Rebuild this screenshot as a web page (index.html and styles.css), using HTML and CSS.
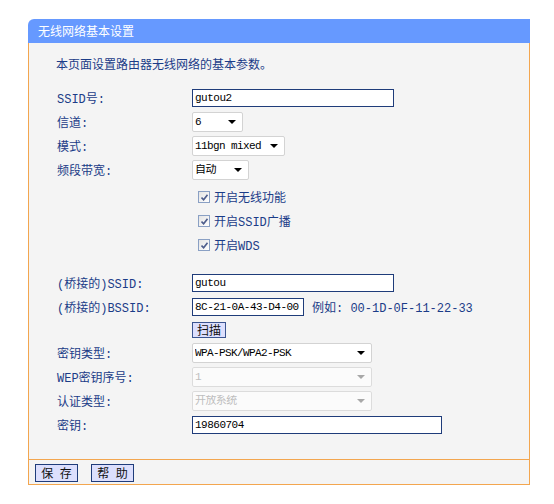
FILE: index.html
```html
<!DOCTYPE html>
<html lang="zh-CN">
<head>
  <meta charset="UTF-8" />
  <title>无线网络基本设置</title>
  <link rel="stylesheet" href="styles.css">
</head>
<body>
  <div class="panel">
    <div class="panel-title">无线网络基本设置</div>
    <div class="panel-body">
      <p class="intro">本页面设置路由器无线网络的基本参数。</p>
      <table class="form">
        <tr>
          <td class="lbl">SSID号:</td>
          <td><input class="text w-ssid" type="text" value="gutou2"></td>
        </tr>
        <tr>
          <td class="lbl">信道:</td>
          <td><span class="select w-ch"><select><option>6</option></select></span></td>
        </tr>
        <tr>
          <td class="lbl">模式:</td>
          <td><span class="select w-mode"><select><option>11bgn mixed</option></select></span></td>
        </tr>
        <tr>
          <td class="lbl">频段带宽:</td>
          <td><span class="select w-bw"><select><option>自动</option></select></span></td>
        </tr>
        <tr class="spacer-s"><td colspan="2"></td></tr>
        <tr>
          <td></td>
          <td><label class="chk"><span class="box"><svg width="7" height="7" viewBox="0 0 7 7"><path d="M0.5 3.5 L2.6 5.8 L6.5 0.8" fill="none" stroke="#4d5d8c" stroke-width="1.6"/></svg></span>开启无线功能</label></td>
        </tr>
        <tr>
          <td></td>
          <td><label class="chk"><span class="box"><svg width="7" height="7" viewBox="0 0 7 7"><path d="M0.5 3.5 L2.6 5.8 L6.5 0.8" fill="none" stroke="#4d5d8c" stroke-width="1.6"/></svg></span>开启SSID广播</label></td>
        </tr>
        <tr>
          <td></td>
          <td><label class="chk"><span class="box"><svg width="7" height="7" viewBox="0 0 7 7"><path d="M0.5 3.5 L2.6 5.8 L6.5 0.8" fill="none" stroke="#4d5d8c" stroke-width="1.6"/></svg></span>开启WDS</label></td>
        </tr>
        <tr class="spacer-l"><td colspan="2"></td></tr>
        <tr>
          <td class="lbl">(桥接的)SSID:</td>
          <td><input class="text w-ssid" type="text" value="gutou"></td>
        </tr>
        <tr>
          <td class="lbl">(桥接的)BSSID:</td>
          <td><input class="text w-bssid" type="text" value="8C-21-0A-43-D4-00"><span class="hint">例如: 00-1D-0F-11-22-33</span></td>
        </tr>
        <tr class="row-btn">
          <td></td>
          <td><button class="btn btn-scan">扫描</button></td>
        </tr>
        <tr>
          <td class="lbl">密钥类型:</td>
          <td><span class="select w-wide"><select><option>WPA-PSK/WPA2-PSK</option></select></span></td>
        </tr>
        <tr>
          <td class="lbl">WEP密钥序号:</td>
          <td><span class="select w-wide off"><select disabled><option>1</option></select></span></td>
        </tr>
        <tr>
          <td class="lbl">认证类型:</td>
          <td><span class="select w-wide off"><select disabled><option>开放系统</option></select></span></td>
        </tr>
        <tr>
          <td class="lbl">密钥:</td>
          <td><input class="text w-key" type="text" value="19860704"></td>
        </tr>
      </table>
    </div>
    <div class="panel-foot">
      <button class="btn">保 存</button>
      <button class="btn">帮 助</button>
    </div>
  </div>
</body>
</html>
```

FILE: styles.css
```css
/* colores de la página del router */
:root {
  --azul-titulo: #6699ff;
  --fondo: #f4f4f4;
  --borde: #f3a64f;
  --texto: #1b3c88;
  --borde-input: #1f3c7a;
  --boton: #dcdffd;
}

body {
  margin: 0;
  background: #fff;
  color: var(--texto);
  font-family: "Liberation Mono", "Noto Sans CJK SC", monospace;
  font-size: 12px;
}

.panel {
  width: 502px;
  margin: 19px 0 0 28px;
}

.panel-title {
  height: 24px;
  line-height: 24px;
  padding-left: 10px;
  background: var(--azul-titulo);
  color: #fff;
  border-top-left-radius: 6px;
  font-family: "Noto Sans CJK SC", sans-serif;
  font-size: 12px;
}

.panel-body {
  background: var(--fondo);
  border-left: 1px solid var(--borde);
  border-right: 1px solid var(--borde);
  padding: 14px 0 22px;
}

.intro {
  margin: 0 0 15px 27px;
  line-height: 14px;
  font-family: "Noto Sans CJK SC", sans-serif;
}

.form {
  border-collapse: collapse;
  margin-left: 28px;
}

.form td {
  height: 24px;
  padding: 0;
  vertical-align: middle;
  white-space: nowrap;
}

.form td.lbl {
  width: 135px;
}

.form .spacer-s td { height: 3px; }
.form .spacer-l td { height: 14px; }
.form .row-btn td { height: 22px; }

.text {
  box-sizing: border-box;
  height: 18px;
  border: 1px solid var(--borde-input);
  background: #fff;
  padding: 0 2px;
  margin: 0;
  font-family: "Liberation Mono", "Noto Sans CJK SC", monospace;
  font-size: 11px;
  letter-spacing: -0.5px;
  color: #000;
  vertical-align: middle;
}

.w-ssid { width: 202px; }
.w-bssid { width: 112px; }
.w-key { width: 250px; }

.hint {
  margin-left: 8px;
  vertical-align: middle;
}

.select {
  position: relative;
  display: inline-block;
  vertical-align: middle;
}

.select select {
  -webkit-appearance: none;
  appearance: none;
  box-sizing: border-box;
  width: 100%;
  height: 20px;
  margin: 0;
  padding: 0 2px;
  border: 1px solid #d3d3d3;
  border-radius: 2px;
  background: #fff;
  color: #000;
  font-family: "Liberation Mono", "Noto Sans CJK SC", monospace;
  font-size: 11px;
  letter-spacing: -0.6px;
}

.select::after {
  content: "";
  position: absolute;
  right: 7px;
  top: 8px;
  border-left: 4px solid transparent;
  border-right: 4px solid transparent;
  border-top: 4px solid #000;
}

.select.off select {
  color: #a8a8a8;
  background: #fff;
}

.select.off::after {
  border-top-color: #a8a8a8;
}

.w-ch { width: 51px; }
.w-mode { width: 93px; }
.w-bw { width: 57px; }
.w-wide { width: 180px; }

.chk {
  display: flex;
  align-items: center;
  gap: 4px;
  margin-left: 6px;
  font-family: "Liberation Mono", "Noto Sans CJK SC", monospace;
}

.box {
  box-sizing: border-box;
  width: 12px;
  height: 12px;
  border: 1px solid #8aa0c4;
  background: linear-gradient(135deg, #e4e4e4, #fff);
  display: flex;
  align-items: center;
  justify-content: center;
}

.btn {
  box-sizing: border-box;
  height: 18px;
  padding: 0 4px;
  margin: 0;
  border: 1px solid var(--borde-input);
  background: var(--boton);
  color: #111;
  font-family: "Noto Sans CJK SC", sans-serif;
  font-size: 12px;
  line-height: 16px;
  word-spacing: 4px;
  cursor: pointer;
}

.btn-scan {
  width: 34px;
  height: 16px;
  padding: 0;
  line-height: 14px;
  border-color: #3a5490;
}

.panel-foot {
  display: flex;
  gap: 13px;
  height: 26px;
  padding: 4px 0 0 6px;
  box-sizing: border-box;
  background: var(--fondo);
  border: 1px solid var(--borde);
}

.panel-foot .btn {
  width: 43px;
}
```
